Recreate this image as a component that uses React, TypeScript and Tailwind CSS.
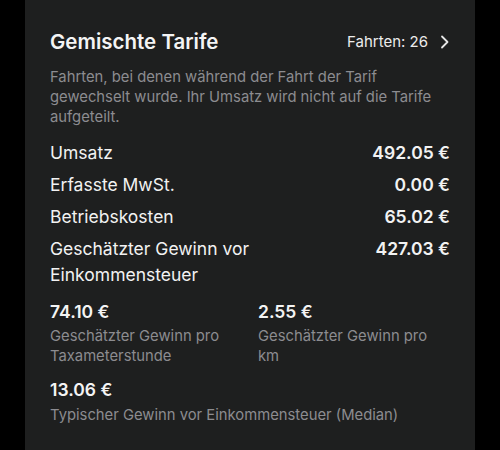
import React from "react";

const rows: { label: string; value: string }[] = [
  { label: "Umsatz", value: "492.05 €" },
  { label: "Erfasste MwSt.", value: "0.00 €" },
  { label: "Betriebskosten", value: "65.02 €" },
  { label: "Geschätzter Gewinn vor Einkommensteuer", value: "427.03 €" },
];

export default function App() {
  return (
    <div
      className="w-[500px] h-[450px] bg-black flex justify-center overflow-hidden"
      style={{ fontFamily: "Inter, 'Noto Sans', sans-serif" }}
    >
      <div className="w-[450px] h-full bg-[#1e1f1f] px-[25px] pt-[28px]">
        <div className="flex items-center justify-between h-[28px]">
          <div className="text-[20.5px] font-semibold text-[#f4f4f4]">
            Gemischte Tarife
          </div>
          <div className="flex items-center gap-[12px] text-[15px] text-[#ececec]">
            <span>Fahrten: 26</span>
            <svg width="10" height="14" viewBox="0 0 10 14" fill="none">
              <path d="M2 1.5 L7.5 7 L2 12.5" stroke="#e6e6e6" strokeWidth="1.8" strokeLinecap="round" strokeLinejoin="round" />
            </svg>
          </div>
        </div>
        <p className="mt-[11px] text-[14.8px] leading-[20px] text-[#8c8c90] pr-[10px]">
          Fahrten, bei denen während der Fahrt der Tarif gewechselt wurde. Ihr Umsatz wird nicht auf die Tarife aufgeteilt.
        </p>
        <div className="mt-[13px] flex flex-col gap-[6px]">
          {rows.map((r) => (
            <div key={r.label} className="flex justify-between items-start text-[17.5px] leading-[26px] text-[#f2f2f2]">
              <span className="max-w-[240px]">{r.label}</span>
              <span className="font-semibold">{r.value}</span>
            </div>
          ))}
        </div>
        <div className="mt-[12px] grid grid-cols-[208px_1fr]">
          <div>
            <div className="text-[17.5px] leading-[24px] font-semibold text-[#f4f4f4]">74.10 €</div>
            <div className="mt-[2px] text-[14.8px] leading-[20px] text-[#8c8c90] max-w-[180px]">
              Geschätzter Gewinn pro Taxameterstunde
            </div>
          </div>
          <div>
            <div className="text-[17.5px] leading-[24px] font-semibold text-[#f4f4f4]">2.55 €</div>
            <div className="mt-[2px] text-[14.8px] leading-[20px] text-[#8c8c90] max-w-[180px]">
              Geschätzter Gewinn pro km
            </div>
          </div>
        </div>
        <div className="mt-[12px]">
          <div className="text-[17.5px] leading-[24px] font-semibold text-[#f4f4f4]">13.06 €</div>
          <div className="mt-[3px] text-[14.8px] leading-[20px] text-[#8c8c90]">
            Typischer Gewinn vor Einkommensteuer (Median)
          </div>
        </div>
      </div>
    </div>
  );
}
